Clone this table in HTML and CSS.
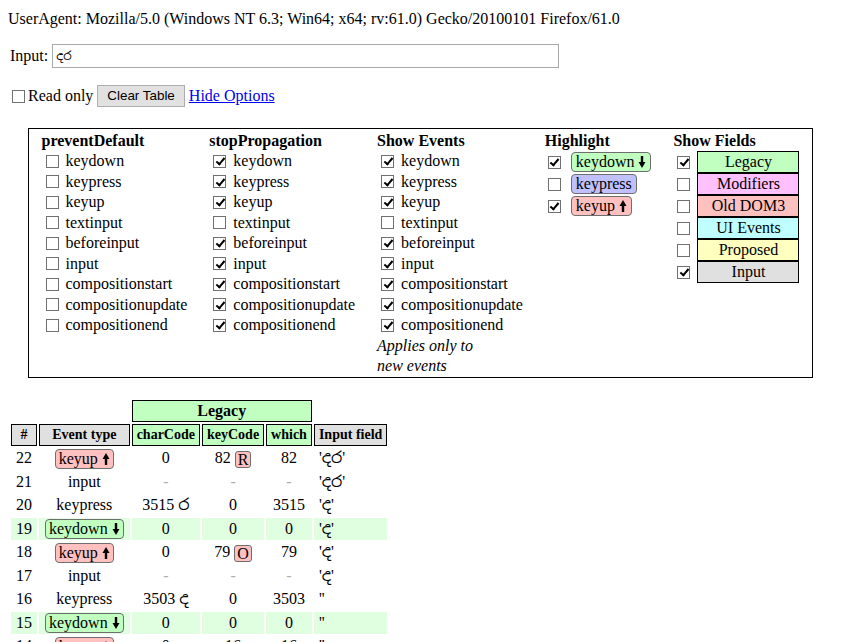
FILE: index.html
```html
<!DOCTYPE html>
<html>
<head>
<meta charset="utf-8">
<title>Key Event Viewer</title>
<link rel="stylesheet" href="styles.css">
</head>
<body>
<div class="ua">UserAgent: Mozilla/5.0 (Windows NT 6.3; Win64; x64; rv:61.0) Gecko/20100101 Firefox/61.0</div>

<div class="input-row">
  <label for="input">Input:</label> <input id="input" class="text-input" type="text" value="දර">
</div>

<div class="controls">
  <input type="checkbox" class="cb ro"><span>Read only</span> <button class="btn" type="button">Clear Table</button> <a href="#" class="link">Hide Options</a>
</div>

<div class="options">
  <div class="col">
    <div class="title">preventDefault</div>
    <label class="opt"><input type="checkbox" class="cb">keydown</label>
    <label class="opt"><input type="checkbox" class="cb">keypress</label>
    <label class="opt"><input type="checkbox" class="cb">keyup</label>
    <label class="opt"><input type="checkbox" class="cb">textinput</label>
    <label class="opt"><input type="checkbox" class="cb">beforeinput</label>
    <label class="opt"><input type="checkbox" class="cb">input</label>
    <label class="opt"><input type="checkbox" class="cb">compositionstart</label>
    <label class="opt"><input type="checkbox" class="cb">compositionupdate</label>
    <label class="opt"><input type="checkbox" class="cb">compositionend</label>
  </div>
  <div class="col">
    <div class="title">stopPropagation</div>
    <label class="opt"><input type="checkbox" class="cb" checked>keydown</label>
    <label class="opt"><input type="checkbox" class="cb" checked>keypress</label>
    <label class="opt"><input type="checkbox" class="cb" checked>keyup</label>
    <label class="opt"><input type="checkbox" class="cb">textinput</label>
    <label class="opt"><input type="checkbox" class="cb" checked>beforeinput</label>
    <label class="opt"><input type="checkbox" class="cb" checked>input</label>
    <label class="opt"><input type="checkbox" class="cb" checked>compositionstart</label>
    <label class="opt"><input type="checkbox" class="cb" checked>compositionupdate</label>
    <label class="opt"><input type="checkbox" class="cb" checked>compositionend</label>
  </div>
  <div class="col">
    <div class="title">Show Events</div>
    <label class="opt"><input type="checkbox" class="cb" checked>keydown</label>
    <label class="opt"><input type="checkbox" class="cb" checked>keypress</label>
    <label class="opt"><input type="checkbox" class="cb" checked>keyup</label>
    <label class="opt"><input type="checkbox" class="cb">textinput</label>
    <label class="opt"><input type="checkbox" class="cb" checked>beforeinput</label>
    <label class="opt"><input type="checkbox" class="cb" checked>input</label>
    <label class="opt"><input type="checkbox" class="cb" checked>compositionstart</label>
    <label class="opt"><input type="checkbox" class="cb" checked>compositionupdate</label>
    <label class="opt"><input type="checkbox" class="cb" checked>compositionend</label>
    <div class="note">Applies only to<br>new events</div>
  </div>
  <div class="col">
    <div class="title">Highlight</div>
    <label class="hl"><input type="checkbox" class="cb" checked><span class="pill down">keydown <svg class="arrow" viewBox="0 0 8 12" width="8" height="12"><rect x="2.8" y="0" width="2.4" height="7" fill="#000"/><polygon points="0.5,6 7.5,6 4,12" fill="#000"/></svg></span></label>
    <label class="hl"><input type="checkbox" class="cb"><span class="pill press">keypress</span></label>
    <label class="hl"><input type="checkbox" class="cb" checked><span class="pill up">keyup <svg class="arrow" viewBox="0 0 8 12" width="8" height="12"><rect x="2.8" y="5" width="2.4" height="7" fill="#000"/><polygon points="0.5,6 7.5,6 4,0" fill="#000"/></svg></span></label>
  </div>
  <div class="col">
    <div class="title">Show Fields</div>
    <label class="field"><input type="checkbox" class="cb" checked><span class="fbox legacy">Legacy</span></label>
    <label class="field"><input type="checkbox" class="cb"><span class="fbox modifiers">Modifiers</span></label>
    <label class="field"><input type="checkbox" class="cb"><span class="fbox olddom">Old DOM3</span></label>
    <label class="field"><input type="checkbox" class="cb"><span class="fbox uievents">UI Events</span></label>
    <label class="field"><input type="checkbox" class="cb"><span class="fbox proposed">Proposed</span></label>
    <label class="field"><input type="checkbox" class="cb" checked><span class="fbox inputf">Input</span></label>
  </div>
</div>

<table class="events">
  <thead>
    <tr>
      <th class="empty"></th>
      <th class="empty"></th>
      <th class="legacy-head" colspan="3">Legacy</th>
      <th class="empty"></th>
    </tr>
    <tr>
      <th class="gray">#</th>
      <th class="gray">Event type</th>
      <th class="green">charCode</th>
      <th class="green">keyCode</th>
      <th class="green">which</th>
      <th class="gray">Input field</th>
    </tr>
  </thead>
  <tbody>
    <tr>
      <td>22</td>
      <td><span class="pill up">keyup <svg class="arrow" viewBox="0 0 8 12" width="8" height="12"><rect x="2.8" y="5" width="2.4" height="7" fill="#000"/><polygon points="0.5,6 7.5,6 4,0" fill="#000"/></svg></span></td>
      <td>0</td>
      <td>82 <span class="key">R</span></td>
      <td>82</td>
      <td class="val">'දර'</td>
    </tr>
    <tr>
      <td>21</td>
      <td>input</td>
      <td class="dash">-</td>
      <td class="dash">-</td>
      <td class="dash">-</td>
      <td class="val">'දර'</td>
    </tr>
    <tr>
      <td>20</td>
      <td>keypress</td>
      <td>3515 ර</td>
      <td>0</td>
      <td>3515</td>
      <td class="val">'ද'</td>
    </tr>
    <tr class="kd">
      <td>19</td>
      <td><span class="pill down">keydown <svg class="arrow" viewBox="0 0 8 12" width="8" height="12"><rect x="2.8" y="0" width="2.4" height="7" fill="#000"/><polygon points="0.5,6 7.5,6 4,12" fill="#000"/></svg></span></td>
      <td>0</td>
      <td>0</td>
      <td>0</td>
      <td class="val">'ද'</td>
    </tr>
    <tr>
      <td>18</td>
      <td><span class="pill up">keyup <svg class="arrow" viewBox="0 0 8 12" width="8" height="12"><rect x="2.8" y="5" width="2.4" height="7" fill="#000"/><polygon points="0.5,6 7.5,6 4,0" fill="#000"/></svg></span></td>
      <td>0</td>
      <td>79 <span class="key">O</span></td>
      <td>79</td>
      <td class="val">'ද'</td>
    </tr>
    <tr>
      <td>17</td>
      <td>input</td>
      <td class="dash">-</td>
      <td class="dash">-</td>
      <td class="dash">-</td>
      <td class="val">'ද'</td>
    </tr>
    <tr>
      <td>16</td>
      <td>keypress</td>
      <td>3503 ද</td>
      <td>0</td>
      <td>3503</td>
      <td class="val">''</td>
    </tr>
    <tr class="kd">
      <td>15</td>
      <td><span class="pill down">keydown <svg class="arrow" viewBox="0 0 8 12" width="8" height="12"><rect x="2.8" y="0" width="2.4" height="7" fill="#000"/><polygon points="0.5,6 7.5,6 4,12" fill="#000"/></svg></span></td>
      <td>0</td>
      <td>0</td>
      <td>0</td>
      <td class="val">''</td>
    </tr>
    <tr>
      <td>14</td>
      <td><span class="pill up">keyup <svg class="arrow" viewBox="0 0 8 12" width="8" height="12"><rect x="2.8" y="5" width="2.4" height="7" fill="#000"/><polygon points="0.5,6 7.5,6 4,0" fill="#000"/></svg></span></td>
      <td>0</td>
      <td>16</td>
      <td>16</td>
      <td class="val">''</td>
    </tr>
  </tbody>
</table>
</body>
</html>
```

FILE: styles.css
```css
html, body {
  background: #fff;
}
body {
  margin: 8px;
  font-family: "Liberation Serif", "Noto Sans Sinhala", "Noto Sans", serif;
  font-size: 16px;
  color: #000;
}

.ua {
  margin-top: 2px;
  line-height: 18px;
}

.input-row {
  margin-top: 16px;
  display: flex;
  align-items: center;
  padding-left: 2px;
}
.input-row label {
  margin-right: 4px;
}
.text-input {
  width: 507px;
  height: 24px;
  box-sizing: border-box;
  border: 1px solid #a9a9a9;
  padding: 0 3px;
  font-family: "Liberation Sans", "Noto Sans Sinhala", sans-serif;
  font-size: 12px;
  color: #000;
  background: #fff;
  margin: 0;
  outline: none;
}

.controls {
  margin-top: 17px;
  display: flex;
  align-items: center;
  height: 22px;
}
.controls .ro {
  margin: 0 3px 0 4px;
}
.btn {
  font-family: "Liberation Sans", sans-serif;
  font-size: 13.4px;
  line-height: 16px;
  padding: 2px 9px;
  margin: 0 4px;
  border: 1px solid #adadad;
  background: #e1e1e1;
  color: #000;
  border-radius: 0;
}
.link {
  color: #0000ee;
  text-decoration: underline;
}

/* checkbox */
.cb {
  -webkit-appearance: none;
  appearance: none;
  width: 13px;
  height: 13px;
  box-sizing: border-box;
  border: 1px solid #707070;
  background: #fff;
  margin: 0;
  position: relative;
  flex: none;
}
.cb:checked::after {
  content: "";
  position: absolute;
  left: 3.5px;
  top: 0.5px;
  width: 3px;
  height: 7px;
  border: solid #000;
  border-width: 0 2px 2px 0;
  transform: rotate(40deg);
}

/* options box */
.options {
  display: flex;
  gap: 22px;
  width: fit-content;
  margin: 21px auto 0;
  border: 1px solid #000;
  padding: 1px 13px 1px;
}
.col {
  display: flex;
  flex-direction: column;
}
.title {
  font-weight: bold;
  line-height: 21px;
}
.opt {
  display: flex;
  align-items: center;
  height: 20.5px;
}
.opt .cb {
  margin: 0 7px 0 4px;
}
.note {
  font-style: italic;
  line-height: 20px;
}

.hl {
  display: flex;
  align-items: center;
  height: 22px;
}
.hl .cb {
  margin: 0 10px 0 3px;
}

.pill {
  display: inline-block;
  border: 1px solid #6e6e6e;
  border-radius: 4px;
  padding: 0 4px;
  line-height: 18px;
  white-space: nowrap;
}
.pill.down { background: #c0ffc0; }
.pill.press { background: #c0c0ff; }
.pill.up { background: #ffc0c0; }
.arrow {
  display: inline-block;
  vertical-align: -1px;
}

.field {
  display: flex;
  align-items: center;
  height: 22px;
}
.field .cb {
  margin: 0 7px 0 4px;
}
.fbox {
  display: inline-block;
  height: 22px;
  box-sizing: border-box;
  width: 102px;
  border: 1px solid #000;
  text-align: center;
  line-height: 20px;
}
.legacy { background: #c0ffc0; }
.modifiers { background: #ffc0ff; }
.olddom { background: #ffc0c0; }
.uievents { background: #c0ffff; }
.proposed { background: #ffffc0; }
.inputf { background: #e0e0e0; }

/* events table */
.events {
  margin-top: 20px;
  margin-left: 1px;
  border-collapse: separate;
  border-spacing: 2px;
}
.events th {
  border: 1px solid #000;
  padding: 0 4px;
  line-height: 20px;
  font-size: 14px;
  font-weight: bold;
  white-space: nowrap;
}
.events th.empty {
  border: none;
}
.events th.legacy-head {
  font-size: 16px;
  background: #c0ffc0;
}
.events th.gray { background: #e0e0e0; }
.events th.green { background: #c0ffc0; }
.events td {
  padding: 0 5px;
  height: 21.5px;
  line-height: 20px;
  text-align: center;
  white-space: nowrap;
}
.events td .pill {
  padding: 0 3px;
  margin: 0 1px;
  vertical-align: middle;
  line-height: 18px;
}
.events td.val {
  text-align: left;
}
.events td.dash {
  color: #b0b0b0;
}
.events tr.kd td {
  background: #e0ffe0;
}
.key {
  display: inline-block;
  background: #ffc0c0;
  border: 1px solid #6e6e6e;
  border-radius: 3px;
  padding: 0 2px;
  line-height: 15px;
  vertical-align: middle;
}
```
